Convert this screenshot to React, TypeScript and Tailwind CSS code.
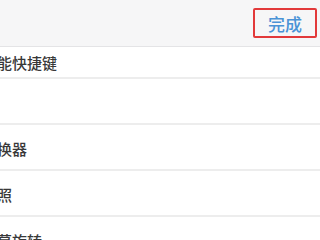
import React from 'react';

const rows = ['能快捷键', '', '换器', '照', '幕旋转'];

export default function App() {
  return (
    <div
      className="w-[320px] h-[240px] overflow-hidden bg-white"
      style={{ fontFamily: '"Noto Sans CJK SC", "Noto Sans", sans-serif' }}
    >
      {/* header */}
      <div className="h-[47px] bg-[#f6f6f7] border-b border-[#e4e4e6] flex items-center justify-end pr-[3px]">
        <div className="w-[64px] h-[30px] border-2 border-[#e2393a] rounded-[2px] flex items-center justify-center">
          <span className="text-[17px] leading-none font-medium text-[#4a93d6]">完成</span>
        </div>
      </div>

      {/* list */}
      <div className="h-[32px] border-b-2 border-[#ededed] flex items-center pt-[1px]">
        <span className="ml-[-3px] text-[15px] leading-none font-medium text-[#383838]">{rows[0]}</span>
      </div>
      {rows.slice(1).map((label, i) => (
        <div key={i} className="h-[46px] border-b-2 border-[#ededed] flex items-center pt-[3px]">
          <span className="ml-[-3px] text-[15px] leading-none font-medium text-[#383838]">{label}</span>
        </div>
      ))}
    </div>
  );
}
